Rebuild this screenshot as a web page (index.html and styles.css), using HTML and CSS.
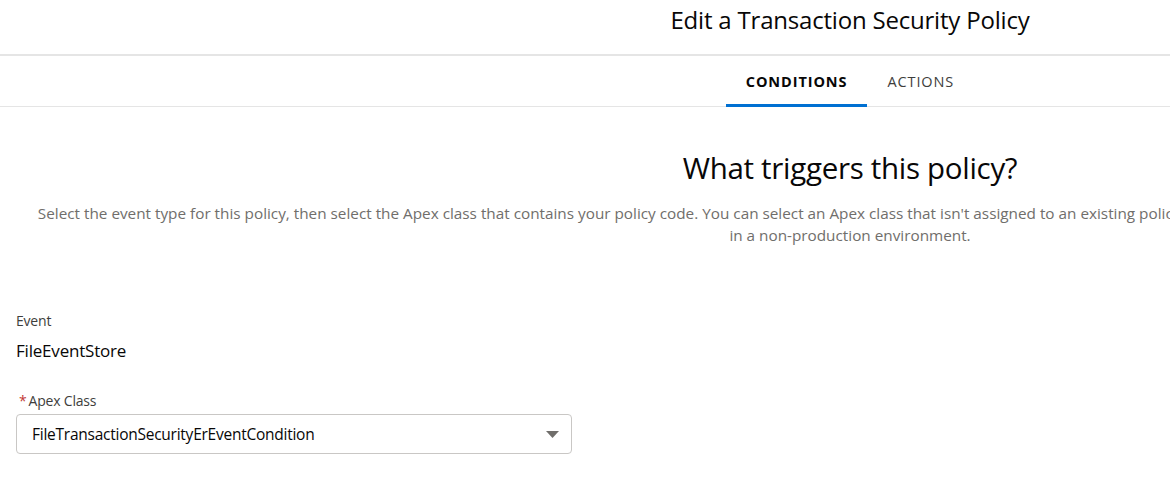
FILE: index.html
```html
<!DOCTYPE html>
<html>
<head>
<meta charset="utf-8">
<link rel="stylesheet" href="styles.css">
</head>
<body>
<div class="page">
  <header class="header">
    <h1 class="title">Edit a Transaction Security Policy</h1>
  </header>
  <nav class="tabs">
    <div class="tab active">CONDITIONS</div>
    <div class="tab">ACTIONS</div>
  </nav>
  <section class="intro">
    <h2 class="heading">What triggers this policy?</h2>
    <p class="desc">Select the event type for this policy, then select the Apex class that contains your policy code. You can select an Apex class that isn't assigned to an existing policy. If you don't have an Apex class, you can create a new one, but only<br>in a non-production environment.</p>
  </section>
  <section class="form">
    <div class="field">
      <div class="label">Event</div>
      <div class="value">FileEventStore</div>
    </div>
    <div class="field">
      <div class="label"><span class="req">*</span>Apex Class</div>
      <div class="select">
        <span class="select-text">FileTransactionSecurityErEventCondition</span>
        <svg class="caret" width="13" height="7" viewBox="0 0 13 7"><path d="M0 0 H13 L6.5 7 Z" fill="#706e6b"/></svg>
      </div>
    </div>
  </section>
</div>
</body>
</html>
```
FILE: styles.css
```css
html, body {
  margin: 0;
  padding: 0;
  overflow: hidden;
  background: #fff;
}
body {
  font-family: "Open Sans", "Noto Sans", sans-serif;
  color: #080707;
}
.page {
  width: 1700px;
}
.header {
  height: 54px;
  border-bottom: 2px solid #e5e5e5;
  display: flex;
  justify-content: center;
  align-items: center;
}
.title {
  margin: 0;
  font-weight: 400;
  font-size: 24px;
  line-height: 1;
  padding-bottom: 14px;
  letter-spacing: -0.2px;
}
.tabs {
  height: 50px;
  border-bottom: 1px solid #e5e5e5;
  display: flex;
  justify-content: center;
}
.tab {
  padding: 0 20px;
  display: flex;
  align-items: center;
  font-size: 14.5px;
  letter-spacing: 0.9px;
  color: #3e3e3c;
  border-bottom: 3px solid transparent;
  margin-bottom: -1px;
  padding-top: 2px;
}
.tab.active {
  font-weight: 700;
  color: #080707;
  border-bottom-color: #0070d2;
}
.intro {
  text-align: center;
  padding-top: 42px;
}
.heading {
  margin: 0;
  font-weight: 400;
  font-size: 29.5px;
  line-height: 38px;
  letter-spacing: -0.3px;
}
.desc {
  margin: 15px 0 0;
  font-size: 15.3px;
  line-height: 22px;
  color: #706e6b;
  white-space: nowrap;
}
.form {
  padding: 66px 16px 0;
  width: 556px;
}
.field {
  margin-bottom: 30px;
}
.label {
  font-size: 14px;
  line-height: 18px;
  color: #3e3e3c;
  letter-spacing: -0.2px;
}
.req {
  color: #c23934;
  margin: 0 2px 0 3px;
}
.value {
  font-size: 17px;
  line-height: 22px;
  padding-top: 10px;
  letter-spacing: -0.2px;
}
.select {
  margin-top: 4px;
  height: 38px;
  border: 1px solid #c9c7c5;
  border-radius: 4px;
  display: flex;
  align-items: center;
  justify-content: space-between;
  padding: 0 12px 0 15px;
}
.select-text {
  font-size: 15.5px;
  letter-spacing: -0.25px;
  color: #080707;
}
.caret {
  display: block;
}
```
